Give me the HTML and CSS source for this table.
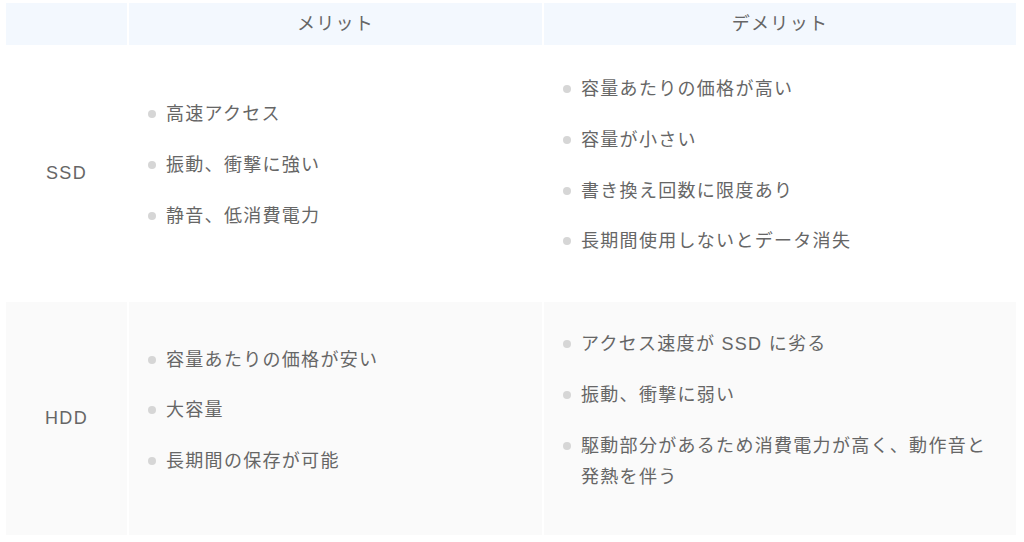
FILE: index.html
```html
<!DOCTYPE html>
<html lang="ja">
<head>
<meta charset="utf-8">
<title>SSD と HDD の比較</title>
<link rel="stylesheet" href="styles.css">
</head>
<body>
<div class="compare">
  <div class="cell head"></div>
  <div class="cell head">メリット</div>
  <div class="cell head">デメリット</div>

  <div class="cell label">SSD</div>
  <div class="cell list-cell">
    <ul class="points">
      <li>高速アクセス</li>
      <li>振動、衝撃に強い</li>
      <li>静音、低消費電力</li>
    </ul>
  </div>
  <div class="cell list-cell">
    <ul class="points">
      <li>容量あたりの価格が高い</li>
      <li>容量が小さい</li>
      <li>書き換え回数に限度あり</li>
      <li>長期間使用しないとデータ消失</li>
    </ul>
  </div>

  <div class="cell label alt">HDD</div>
  <div class="cell list-cell alt">
    <ul class="points">
      <li>容量あたりの価格が安い</li>
      <li>大容量</li>
      <li>長期間の保存が可能</li>
    </ul>
  </div>
  <div class="cell list-cell alt">
    <ul class="points">
      <li>アクセス速度が SSD に劣る</li>
      <li>振動、衝撃に弱い</li>
      <li>駆動部分があるため消費電力が高く、動作音と発熱を伴う</li>
    </ul>
  </div>
</div>
</body>
</html>
```

FILE: styles.css
```css
html, body {
  margin: 0;
  padding: 0;
  background: #ffffff;
}

body {
  font-family: "Liberation Sans", "Noto Sans CJK JP", sans-serif;
  color: #666666;
  font-size: 18px;
  letter-spacing: 1.3px;
}

.compare {
  display: grid;
  grid-template-columns: 121px 413px 472px;
  gap: 2px;
  margin: 3px 8px 0 6px;
}

.cell {
  display: flex;
  align-items: center;
}

.head {
  height: 42px;
  justify-content: center;
  background: #f3f8fe;
  color: #666666;
  line-height: 1;
}

.label {
  justify-content: center;
}

.list-cell {
  padding: 27px 20px 43px 19px;
}

.alt {
  background: #fafafa;
}

.points {
  list-style: none;
  margin: 0;
  padding: 0;
  line-height: 30.8px;
}

.points li {
  display: flex;
  margin-bottom: 20px;
}

.points li:last-child {
  margin-bottom: 0;
}

.points li::before {
  content: "";
  flex: 0 0 auto;
  width: 8px;
  height: 8px;
  margin: 11px 10px 0 0;
  border-radius: 50%;
  background: #d6d6d6;
}
```
